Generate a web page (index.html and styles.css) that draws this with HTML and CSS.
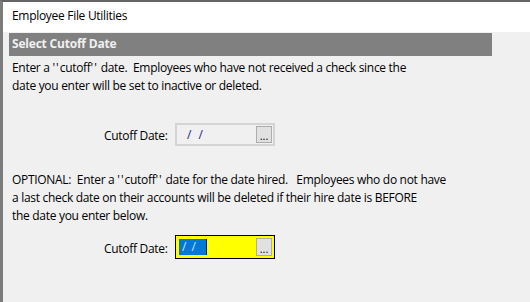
FILE: index.html
```html
<!DOCTYPE html>
<html lang="en">
  <head>
    <meta charset="UTF-8" />
    <title>Employee File Utilities</title>
    <link rel="stylesheet" href="styles.css">
  </head>
  <body>
    <div class="window">
      <div class="titlebar">Employee File Utilities</div>
      <div class="content">
        <div class="section-head">Select Cutoff Date</div>
        <p class="note first">
          Enter a <span class="q">''</span>cutoff<span class="q">''</span> date.&nbsp; Employees who have not received a check since the<br />
          date you enter will be set to inactive or deleted.
        </p>
        <div class="field-row top-field">
          <span class="field-label">Cutoff Date:</span>
          <div class="datebox">
            <span class="date-value">/ /</span>
            <button class="pick">...</button>
          </div>
        </div>
        <p class="note second">
          OPTIONAL:&nbsp; Enter a <span class="q">''</span>cutoff<span class="q">''</span> date for the date hired.&nbsp;&nbsp; Employees who do not have<br />
          a last check date on their accounts will be deleted if their hire date is BEFORE<br />
          the date you enter below.
        </p>
        <div class="field-row bottom-field">
          <span class="field-label">Cutoff Date:</span>
          <div class="datebox active">
            <span class="date-value">/ /</span>
            <button class="pick">...</button>
          </div>
        </div>
      </div>
    </div>
  </body>
</html>
```

FILE: styles.css
```css
* {
  box-sizing: border-box;
  margin: 0;
  padding: 0;
}
body {
  font-family: "Open Sans", "Noto Sans", sans-serif;
  font-size: 12px;
  letter-spacing: -0.3px;
  color: #000;
  background: #f0f0f0;
  width: 530px;
  height: 302px;
  overflow: hidden;
}
.window {
  height: 302px;
  border-left: 3px solid #7c7c7c;
  border-top: 2px solid #646464;
  background: #f0f0f0;
}
.titlebar {
  height: 30px;
  background: #fff;
  padding-left: 9px;
  line-height: 28px;
  font-size: 12px;
}
.content {
  padding: 1px 0 0 6px;
}
.section-head {
  width: 483px;
  height: 23px;
  background: #808080;
  color: #f0f0f0;
  font-weight: bold;
  font-size: 12px;
  letter-spacing: -0.2px;
  line-height: 22px;
  padding-left: 3px;
}
.note {
  line-height: 18px;
  padding-left: 3px;
}
.note .q {
  letter-spacing: 1px;
}
.note.first {
  margin-top: 3px;
}
.note.second {
  margin-top: 25px;
}
.field-row {
  display: flex;
  align-items: center;
  padding-left: 95px;
}
.top-field {
  margin-top: 28px;
}
.bottom-field {
  margin-top: 10px;
}
.field-label {
  width: 71px;
  padding-top: 2px;
}
.datebox {
  width: 100px;
  height: 23px;
  border: 2px solid #d4d4d4;
  background: #f0f0f0;
  display: flex;
  align-items: center;
  justify-content: space-between;
  padding: 0 1px 0 10px;
}
.date-value {
  color: #1a1a8c;
  letter-spacing: 2px;
}
.pick {
  width: 16px;
  height: 17px;
  border: 1px solid #adadad;
  background: #e1e1e1;
  font-family: inherit;
  font-size: 11px;
  line-height: 12px;
  padding-top: 3px;
  color: #000;
}
.datebox.active {
  height: 24px;
  border: 1px solid #000;
  background: #ffff00;
  box-shadow: inset 0 0 0 1px #ffff00;
  padding: 0 2px 0 3px;
}
.datebox.active .date-value {
  width: 28px;
  height: 16px;
  line-height: 16px;
  background: #0078d7;
  border-right: 1px solid #1a1a8c;
  color: #cfe4f7;
  padding-left: 3px;
  letter-spacing: 1px;
  margin-right: auto;
}
.datebox.active .pick {
  height: 18px;
}
```
